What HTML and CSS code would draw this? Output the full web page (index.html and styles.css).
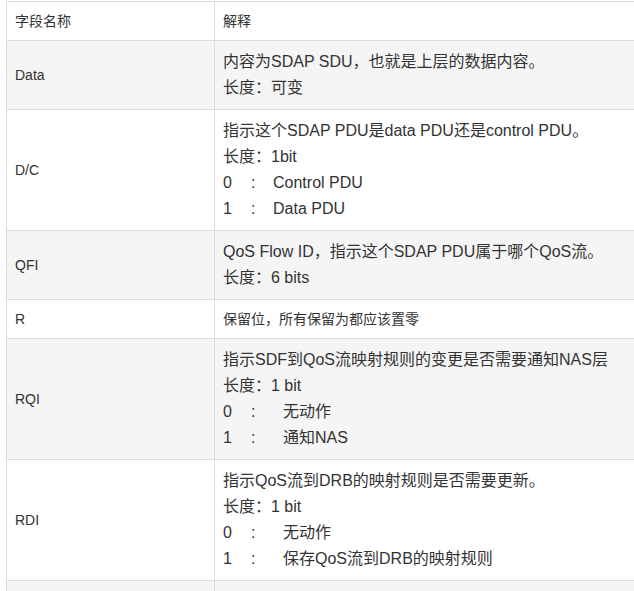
FILE: index.html
```html
<!DOCTYPE html>
<html lang="zh">
<head>
<meta charset="utf-8">
<link rel="stylesheet" href="styles.css">
</head>
<body>
<div class="wrap">
<table class="fields">
  <colgroup><col class="c1"><col class="c2"></colgroup>
  <thead>
    <tr><th>字段名称</th><th>解释</th></tr>
  </thead>
  <tbody>
    <tr class="alt">
      <td class="name">Data</td>
      <td class="desc"><p>内容为SDAP SDU，也就是上层的数据内容。</p><p>长度：可变</p></td>
    </tr>
    <tr>
      <td class="name">D/C</td>
      <td class="desc"><p>指示这个SDAP PDU是data PDU还是control PDU。</p><p>长度：1bit</p><p><span class="k">0</span><span class="c">:</span>Control PDU</p><p><span class="k">1</span><span class="c">:</span>Data PDU</p></td>
    </tr>
    <tr class="alt">
      <td class="name">QFI</td>
      <td class="desc"><p>QoS Flow ID，指示这个SDAP PDU属于哪个QoS流。</p><p>长度：6 bits</p></td>
    </tr>
    <tr>
      <td class="name">R</td>
      <td class="small">保留位，所有保留为都应该置零</td>
    </tr>
    <tr class="alt">
      <td class="name">RQI</td>
      <td class="desc"><p>指示SDF到QoS流映射规则的变更是否需要通知NAS层</p><p>长度：1 bit</p><p><span class="k">0</span><span class="c wide">:</span>无动作</p><p><span class="k">1</span><span class="c wide">:</span>通知NAS</p></td>
    </tr>
    <tr>
      <td class="name">RDI</td>
      <td class="desc"><p>指示QoS流到DRB的映射规则是否需要更新。</p><p>长度：1 bit</p><p><span class="k">0</span><span class="c wide">:</span>无动作</p><p><span class="k">1</span><span class="c wide">:</span>保存QoS流到DRB的映射规则</p></td>
    </tr>
    <tr class="alt">
      <td class="name">&nbsp;</td>
      <td class="desc"><p>&nbsp;</p><p>&nbsp;</p></td>
    </tr>
  </tbody>
</table>
</div>
</body>
</html>
```
FILE: styles.css
```css
html, body {
  margin: 0;
  padding: 0;
  background: #fff;
  overflow: hidden;
}
.wrap {
  padding: 1px 0 0 6px;
}
.fields {
  border-collapse: collapse;
  width: 720px;
  font-family: "Liberation Sans", "Noto Sans CJK SC", Arial, sans-serif;
  color: #333;
  font-size: 14px;
}
.c1 { width: 208px; }
.fields th,
.fields td {
  border: 1px solid #dcdcdc;
  padding: 10px 8px;
  line-height: 18px;
  text-align: left;
  vertical-align: middle;
  font-weight: normal;
}
.fields tr.alt td {
  background: #f5f5f5;
}
.fields td.desc {
  padding: 8px 8px;
  font-size: 16px;
  line-height: 26px;
}
.desc p {
  margin: 0;
  white-space: nowrap;
}
.k {
  display: inline-block;
  width: 28px;
}
.c {
  display: inline-block;
  width: 22px;
}
.c.wide {
  width: 32px;
}
```
